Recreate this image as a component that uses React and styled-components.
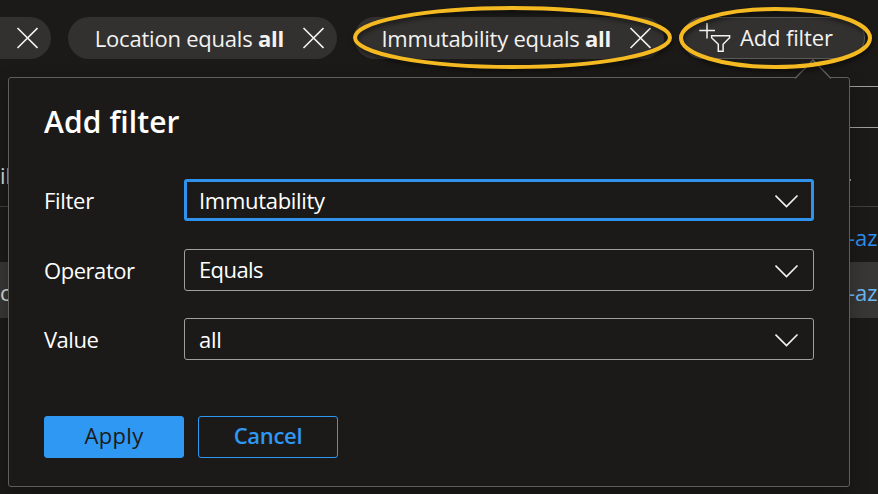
import React from "react";
import styled, { createGlobalStyle } from "styled-components";

const GlobalStyle = createGlobalStyle`
  * { box-sizing: border-box; }
  body {
    margin: 0;
    background: #1b1a19;
    overflow: hidden;
  }
`;

const Page = styled.div`
  position: relative;
  width: 878px;
  height: 494px;
  overflow: hidden;
  background: #1b1a19;
  color: #fff;
  font-family: "Open Sans", "Noto Sans", sans-serif;
  font-size: 22px;
  font-weight: 450;
  line-height: 30px;
`;

const FilterBar = styled.div`
  display: flex;
  gap: 17px;
  height: 86px;
  padding-top: 17px;
`;

const Pill = styled.div`
  display: flex;
  align-items: center;
  justify-content: flex-end;
  flex: none;
  width: ${(p) => p.$width}px;
  height: 42px;
  padding-right: 13px;
  gap: 18px;
  border-radius: ${(p) => (p.$cut ? "0 21px 21px 0" : "21px")};
  background: #323130;
  color: #f3f2f1;
`;

const AddPill = styled(Pill)`
  justify-content: flex-start;
  margin-left: 1px;
  padding: 0 0 0 16px;
  gap: 9px;
  border: 1px solid #5b5a58;
`;

const Text = styled.span`
  white-space: pre;
  letter-spacing: ${(p) => p.$track || 0}px;
  padding-bottom: ${(p) => p.$lift || 0}px;
`;

const SearchRow = styled.div`
  height: 42px;
  margin-left: 24px;
  border: solid #a19f9d;
  border-width: 1px 0;
`;

const TableRow = styled.div`
  display: flex;
  align-items: center;
  justify-content: space-between;
  height: ${(p) => p.$height}px;
  padding: ${(p) => p.$pad || "0"};
  background: ${(p) => (p.$active ? "#383736" : "transparent")};
  border-bottom: ${(p) => (p.$line ? "1px solid #403f3e" : "0")};
  color: #d8d7d6;
`;

const Link = styled.span`
  width: 30px;
  white-space: nowrap;
  color: ${(p) => (p.$bright ? "#6cb8f6" : "#2f8fee")};
`;

const Dot = styled.span`
  width: 28px;
  height: 2px;
  margin-top: 9px;
  border-left: 1px solid #a19f9d;
`;

const Panel = styled.section`
  position: absolute;
  left: 8px;
  top: 77px;
  width: 842px;
  height: 410px;
  padding: 25px 35px 0;
  border: 1px solid #605e5c;
  border-radius: 3px;
  background: #1b1a19;
  box-shadow: 0 6px 18px rgba(0, 0, 0, 0.3);
`;

const Beak = styled.svg`
  position: absolute;
  left: 785px;
  top: -19px;
`;

const Title = styled.h2`
  margin: 0 0 30px;
  height: 46px;
  font-size: 30px;
  line-height: 38px;
  font-weight: 600;
  letter-spacing: 0.1px;
`;

const Fields = styled.div`
  display: grid;
  grid-template-columns: 140px 630px;
  grid-template-rows: repeat(3, 42px);
  row-gap: 27.5px;
  align-items: center;
`;

const Select = styled.div`
  display: flex;
  align-items: center;
  justify-content: space-between;
  height: 42px;
  padding: 0 ${(p) => (p.$focus ? 12 : 14)}px;
  border: ${(p) => (p.$focus ? "3px solid #2f93ee" : "1px solid #a19f9d")};
  border-radius: 3px;

  svg { margin-top: 2px; }
`;

const Actions = styled.div`
  display: flex;
  gap: 14px;
  margin-top: 56px;
`;

const Button = styled.button`
  width: 140px;
  height: 42px;
  padding: 0 0 4px;
  border: 1px solid #2f98f3;
  border-radius: 3px;
  background: ${(p) => (p.$primary ? "#2f98f3" : "transparent")};
  color: ${(p) => (p.$primary ? "#1b1a19" : "#2f98f3")};
  font: ${(p) => (p.$primary ? 500 : 600)} 22px/30px "Open Sans", sans-serif;
  letter-spacing: ${(p) => (p.$primary ? 0.3 : -0.3)}px;
`;

const Annotations = styled.svg`
  position: absolute;
  inset: 0;
  filter: drop-shadow(1px 3px 2px rgba(0, 0, 0, 0.5));
`;

const Close = () => (
  <svg width="22" height="22" viewBox="0 0 22 22" fill="none" stroke="#f3f2f1" strokeWidth="1.6">
    <path d="M1.5 1 21.5 21M21.5 1 1.5 21" />
  </svg>
);

const Chevron = () => (
  <svg width="24" height="14" viewBox="0 0 24 14" fill="none" stroke="#f3f2f1" strokeWidth="1.6">
    <path d="M0.5 1.5 11.5 12.5 22.5 1.5" />
  </svg>
);

const AddFilterIcon = () => (
  <svg width="32" height="30" viewBox="0 0 32 30" fill="none" stroke="#f3f2f1" strokeWidth="1.5">
    <path d="M8 0V15.5M0.3 7.6H16" />
    <path d="M12.6 12.8H30.6V14.8L24.1 21.3V28.2H19.3V21.3L12.6 14.8Z" />
  </svg>
);

export default function App() {
  return (
    <>
      <GlobalStyle />
      <Page>
        <FilterBar>
          <Pill $width={51} $cut><Close /></Pill>
          <Pill $width={269}><Text $track={-0.22}>Location equals <b>all</b></Text><Close /></Pill>
          <Pill $width={310}><Text $track={-0.24}>Immutability equals <b>all</b></Text><Close /></Pill>
          <AddPill $width={183}><AddFilterIcon /><Text $track={-0.15} $lift={2}>Add filter</Text></AddPill>
        </FilterBar>
        <SearchRow />
        <TableRow $height={79} $line $pad="16px 0 0"><Text>il</Text><Dot /></TableRow>
        <TableRow $height={55} $pad="4px 0 0"><span /><Link>-az</Link></TableRow>
        <TableRow $height={56} $active $pad="4px 0 0"><Text>c</Text><Link $bright>-az</Link></TableRow>

        <Panel>
          <Beak width="38" height="20" viewBox="0 0 38 20">
            <path d="M1 19.5 L19 1 L37 19.5" fill="#1b1a19" stroke="#605e5c" strokeWidth="1.3" />
          </Beak>
          <Title>Add filter</Title>
          <Fields>
            <Text $track={-0.3}>Filter</Text>
            <Select $focus><Text $track={-0.3}>Immutability</Text><Chevron /></Select>
            <Text $track={-0.45}>Operator</Text>
            <Select><Text $track={-0.6} $lift={2}>Equals</Text><Chevron /></Select>
            <Text $track={-0.5}>Value</Text>
            <Select><Text $track={-0.3}>all</Text><Chevron /></Select>
          </Fields>
          <Actions>
            <Button $primary>Apply</Button>
            <Button>Cancel</Button>
          </Actions>
        </Panel>

        <Annotations width="878" height="90" fill="none" stroke="#f5b921" strokeWidth="4">
          <ellipse cx="512.5" cy="37.5" rx="157.5" ry="29.5" />
          <ellipse cx="775.5" cy="38" rx="94.5" ry="29" />
        </Annotations>
      </Page>
    </>
  );
}
